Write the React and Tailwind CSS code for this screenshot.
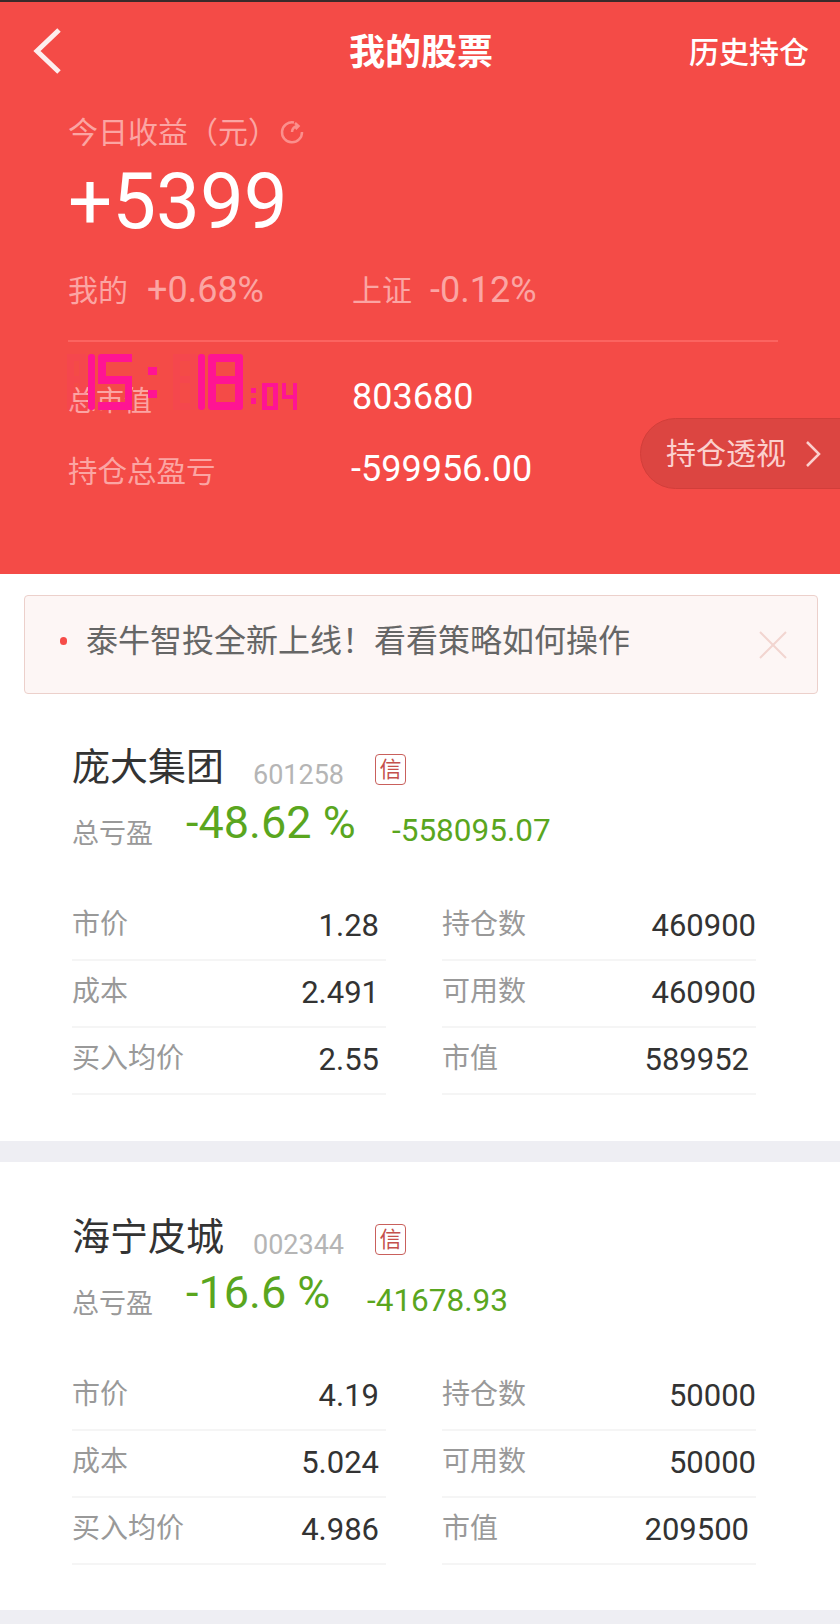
import React from 'react';

const cn = '"Roboto", "Noto Sans CJK SC", sans-serif';

const Row = ({ label, value, shift }) => (
  <div className="flex h-[67px] items-center justify-between border-b-2 border-[#f5f5f5] pb-1">
    <span className="text-[28px] text-[#999999]">{label}</span>
    <span className={`pt-[3px] text-[31px] text-[#333333] ${shift ? 'pr-[7px]' : 'pr-0'}`}>{value}</span>
  </div>
);

const Stock = ({ name, code, pct, loss, lossGap, rows, second }) => (
  <div className={`bg-white pl-[72px] pr-[84px] ${second ? 'h-[448px] pt-[50px]' : 'h-[447px] pt-[48px]'}`}>
    <div className="flex h-[50px] items-center">
      <span className="w-[181px] text-[38px] text-[#333333]">{name}</span>
      <span className="w-[122px] pt-[16px] text-[27px] text-[#b5b5b5]">{code}</span>
      <span className="mt-[4px] flex h-[31px] w-[31px] items-center justify-center rounded-[4px] border border-[#c9605c] text-[22px] text-[#c4504c]">信</span>
    </div>
    <div className="mt-[4px] flex h-[50px] items-center">
      <span className="w-[114px] pt-[27px] text-[27px] text-[#999999]">总亏盈</span>
      <span className="pt-[4px] text-[45px] text-[#5aa61e]" style={{ width: lossGap }}>{pct}</span>
      <span className="pt-[19px] text-[31.5px] text-[#5aa61e]">{loss}</span>
    </div>
    <div className="mt-[48px] grid grid-cols-2 gap-x-[56px]">
      {rows.map((r) => <Row key={r[0]} label={r[0]} value={r[1]} shift={r[2]} />)}
    </div>
  </div>
);

// seven segment clock, the unlit first digits only show as a faint ghost
const Clock = () => (
  <svg className="absolute left-[60px] top-[345px]" width="250" height="75" viewBox="0 0 250 75">
    <g fill="#ff2d7a" opacity="0.12">
      <path d="M7 9h19v56H7zM14 16v15h5V16zM14 38v20h5V38z" fillRule="evenodd" />
      <path d="M113 9h24v56h-24zM120 16v15h10V16zM120 38v20h10V38z" fillRule="evenodd" />
    </g>
    <g fill="#ff1493">
      <rect x="28" y="9" width="7" height="56" rx="3" />
      <path d="M41 9h31v8H46v14h26v34H38v-8h27V39H38V12q0-3 3-3z" />
      <rect x="88" y="22" width="9" height="8" />
      <rect x="88" y="45" width="9" height="8" />
      <rect x="138" y="9" width="7" height="56" rx="3" />
      <path d="M151 9h29q3 0 3 3v50q0 3-3 3h-29q-3 0-3-3V12q0-3 3-3zM156 17v14h19V17zM156 39v18h19V39z" fillRule="evenodd" />
      <rect x="191" y="43" width="5" height="5" />
      <rect x="191" y="53" width="5" height="6" />
      <path d="M202 38h16v27h-16zM207 42v19h6V42z" fillRule="evenodd" />
      <path d="M222 38h4v12h7V38h4v27h-4V54h-11z" />
    </g>
  </svg>
);

const App = () => {
  return (
    <div className="relative h-[1624px] w-[840px] overflow-hidden bg-[#eeeef3]" style={{ fontFamily: cn }}>
      <div className="h-[574px] border-t-2 border-[#3a2a2a] bg-[#f44b47] text-white">
        <div className="flex h-[98px] items-center justify-between pl-[33px] pr-[31px]">
          <svg width="28" height="46" viewBox="0 0 28 46" fill="none" stroke="#fdeeee" strokeWidth="5">
            <path d="M26 2 4 23l22 21" />
          </svg>
          <span className="pl-[92px] pt-[4px] text-[36px] font-bold">我的股票</span>
          <span className="pt-[2px] text-[30px] font-medium">历史持仓</span>
        </div>
        <div className="pl-[68px]">
          <div className="mt-[10px] flex h-[44px] items-center text-[30px] text-[#fba5a3]">
            今日收益（元）
            <svg className="ml-[2px]" width="24" height="24" viewBox="0 0 24 24" fill="none" stroke="#fb8f8c" strokeWidth="2.5">
              <path d="M14 2.5A10 10 0 1 0 22 12M12 12a6 6 0 0 1 6-6M15 3l3.500 3-3 3" />
            </svg>
          </div>
          <div className="mt-[2px] h-[92px] text-[78px] leading-[92px]">+5399</div>
          <div className="mt-[18px] flex h-[48px] items-center text-[#fba5a3]">
            <span className="w-[79px] text-[30px]">我的</span>
            <span className="w-[205px] text-[36px]">+0.68%</span>
            <span className="w-[78px] text-[30px]">上证</span>
            <span className="text-[36px]">-0.12%</span>
          </div>
          <div className="mt-[26px] h-[2px] w-[710px] bg-[#fb6460]" />
          <div className="mt-[30px] flex h-[50px] items-center">
            <span className="w-[284px] pt-[10px] text-[28px] text-[#fba5a3]">总市值</span>
            <span className="text-[36px]">803680</span>
          </div>
          <div className="mt-[22px] flex h-[50px] items-center">
            <span className="w-[283px] pt-[6px] text-[29.500px] text-[#fba5a3]">持仓总盈亏</span>
            <span className="text-[36px]">-599956.00</span>
          </div>
        </div>
      </div>
      <Clock />
      <div className="absolute left-[640px] top-[418px] flex h-[71px] w-[210px] items-center rounded-l-[36px] border border-[#d23e3a] bg-[#dc4541] pl-[25px] text-[30px] text-[#fbd0ce]">
        持仓透视
        <svg className="ml-[19px]" width="16" height="28" viewBox="0 0 16 28" fill="none" stroke="#fbd0ce" strokeWidth="2.5">
          <path d="m2 2 12 12L2 26" />
        </svg>
      </div>
      <div className="h-[120px] bg-white pl-[24px] pr-[22px] pt-[21px]">
        <div className="flex h-[99px] items-center rounded-[4px] border border-[#ecd0cb] bg-[#fdf6f5] pl-[35px] pr-[30px] text-[32px] text-[#666666]">
          <span className="mb-[8px] h-[8px] w-[7px] rounded-full bg-[#f64c48]" />
          <span className="mb-[8px] ml-[19px] flex-1">泰牛智投全新上线！看看策略如何操作</span>
          <svg width="28" height="28" viewBox="0 0 28 28" stroke="#f2d5d0" strokeWidth="2">
            <path d="m1 1 26 26M27 1 1 27" />
          </svg>
        </div>
      </div>
      <Stock
        name="庞大集团" code="601258" pct="-48.62 %" loss="-558095.07" lossGap="206px"
        rows={[['市价', '1.28', true], ['持仓数', '460900'], ['成本', '2.491', true], ['可用数', '460900'], ['买入均价', '2.55', true], ['市值', '589952', true]]}
      />
      <div className="h-[21px]" />
      <Stock
        second
        name="海宁皮城" code="002344" pct="-16.6 %" loss="-41678.93" lossGap="181px"
        rows={[['市价', '4.19', true], ['持仓数', '50000'], ['成本', '5.024', true], ['可用数', '50000'], ['买入均价', '4.986', true], ['市值', '209500', true]]}
      />
    </div>
  );
};

export default App;
